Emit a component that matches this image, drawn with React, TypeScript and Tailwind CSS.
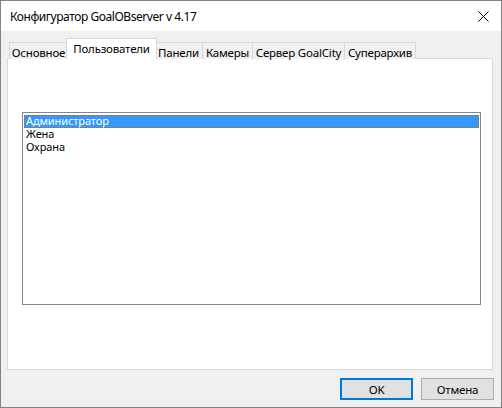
import React from "react";

const tabs = [
  { label: "Основное", w: 59 },
  { label: "Пользователи", w: 87, active: true },
  { label: "Панели", w: 48 },
  { label: "Камеры", w: 50 },
  { label: "Сервер GoalCity", w: 92 },
  { label: "Суперархив", w: 71 },
];

const users = ["Администратор", "Жена", "Охрана"];

export default function App() {
  return (
    <div
      className="w-[502px] h-[408px] flex flex-col border border-[#838383] bg-[#f0f0f0] text-black text-[11.5px] leading-[13px] tracking-[-0.2px] whitespace-nowrap"
      style={{ fontFamily: '"Noto Sans", "Open Sans", sans-serif' }}
    >
      {/* title bar */}
      <div className="h-[30px] bg-white flex items-center justify-between pl-[9px] pr-[11px] shrink-0">
        <span className="text-[12px] tracking-[-0.45px]">Конфигуратор GoalOBserver v 4.17</span>
        <svg width="11" height="11" viewBox="0 0 11 11" className="mr-[1px]">
          <path d="M0.5 0.5 L10.5 10.5 M10.5 0.5 L0.5 10.5" stroke="#000" strokeWidth="1" fill="none" />
        </svg>
      </div>

      {/* tab control */}
      <div className="flex flex-col pl-[6px] pr-[8px] pt-[7px]">
        <div className="relative z-10 flex items-end h-[21px] -mb-px pl-[2px]">
          {tabs.map((t) =>
            t.active ? (
              <div
                key={t.label}
                className="h-[21px] bg-white border border-b-0 border-[#d9d9d9] flex items-start justify-center pt-[3px] -mx-[2px] relative z-10"
                style={{ width: t.w + 4 }}
              >
                {t.label}
              </div>
            ) : (
              <div
                key={t.label}
                className="h-[17px] bg-[#f0f0f0] border border-b-0 border-l-0 first:border-l border-[#d9d9d9] flex items-center justify-center pt-[2px]"
                style={{ width: t.w }}
              >
                {t.label}
              </div>
            )
          )}
        </div>
        <div className="h-[312px] bg-white border border-[#d9d9d9] pl-[14px] pt-[53px]">
          <div className="w-[459px] h-[193px] border border-[#828790] bg-white p-px text-[11px] tracking-[-0.1px]">
            {users.map((u, i) => (
              <div
                key={u}
                className={
                  i === 0
                    ? "h-[13px] leading-[12px] bg-[#3399ff] text-white pl-[2px] outline-1 outline-dotted outline-[#cc6600] -outline-offset-1 mt-px"
                    : "h-[13px] leading-[12px] pl-[2px]"
                }
              >
                {u}
              </div>
            ))}
          </div>
        </div>
      </div>

      {/* dialog buttons */}
      <div className="flex justify-end gap-[8px] pr-[7px] pt-[8px]">
        <button className="w-[73px] h-[22px] bg-[#e1e1e1] border-2 border-[#0078d7] flex items-center justify-center">
          OK
        </button>
        <button className="w-[73px] h-[22px] bg-[#e1e1e1] border border-[#adadad] flex items-center justify-center">
          Отмена
        </button>
      </div>
    </div>
  );
}
